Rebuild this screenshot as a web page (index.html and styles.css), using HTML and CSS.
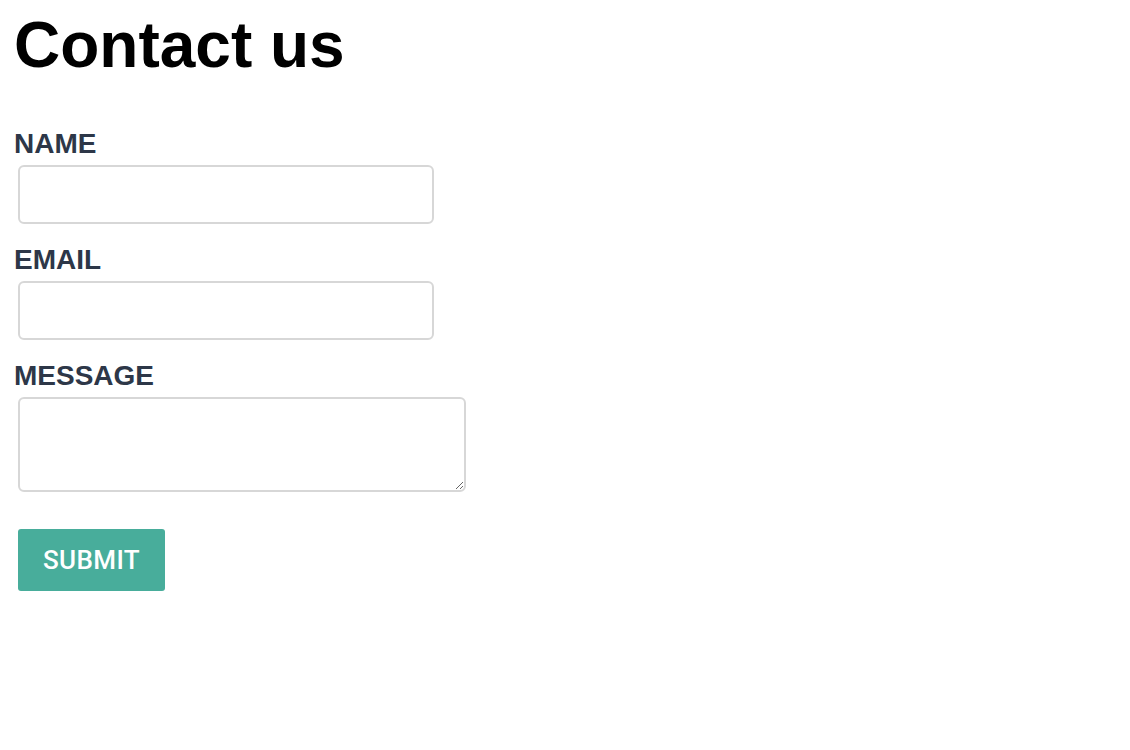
FILE: index.html
```html
<!DOCTYPE html>
<html lang="en">
<head>
    <meta charset="UTF-8">
    <meta name="viewport" content="width=device-width, initial-scale=1.0">
    <title>Contact us</title>
    <link rel="stylesheet" href="styles.css">
</head>
<body>
    <h1>Contact us</h1>
    <form class="contact-form">
        <div class="field">
            <label for="name">NAME</label>
            <input type="text" id="name" name="name">
        </div>
        <div class="field">
            <label for="email">EMAIL</label>
            <input type="email" id="email" name="email">
        </div>
        <div class="field">
            <label for="message">MESSAGE</label>
            <textarea id="message" name="message"></textarea>
        </div>
        <button type="submit">SUBMIT</button>
    </form>
</body>
</html>
```

FILE: styles.css
```css
body {
    font-family: "Liberation Sans", Arial, sans-serif;
    margin: 0;
    padding: 5px 13px;
    background-color: #ffffff;
}
h1 {
    font-size: 64px;
    line-height: 74px;
    font-weight: bold;
    color: #000000;
    margin: 0 0 46px 1px;
    padding-top: 3px;
}
.contact-form {
    display: flex;
    flex-direction: column;
    align-items: flex-start;
    gap: 15px;
}
.field {
    display: flex;
    flex-direction: column;
    align-items: flex-start;
}
label {
    font-size: 28px;
    line-height: 32px;
    font-weight: bold;
    color: #2d3748;
    padding-left: 1px;
}
input, textarea {
    box-sizing: border-box;
    margin: 5px;
    border: 2px solid #d7d7d7;
    border-radius: 6px;
    font-family: "Liberation Sans", Arial, sans-serif;
    font-size: 20px;
    padding: 10px;
}
input {
    width: 416px;
    height: 59px;
}
textarea {
    width: 448px;
    height: 95px;
}
button {
    box-sizing: border-box;
    margin: 17px 5px 0;
    width: 147px;
    height: 62px;
    background-color: #48ad9b;
    color: #ffffff;
    border: none;
    border-radius: 3px;
    font-family: Roboto, "Liberation Sans", sans-serif;
    font-size: 26px;
    font-weight: 500;
    letter-spacing: 0.4px;
    cursor: pointer;
}
```
